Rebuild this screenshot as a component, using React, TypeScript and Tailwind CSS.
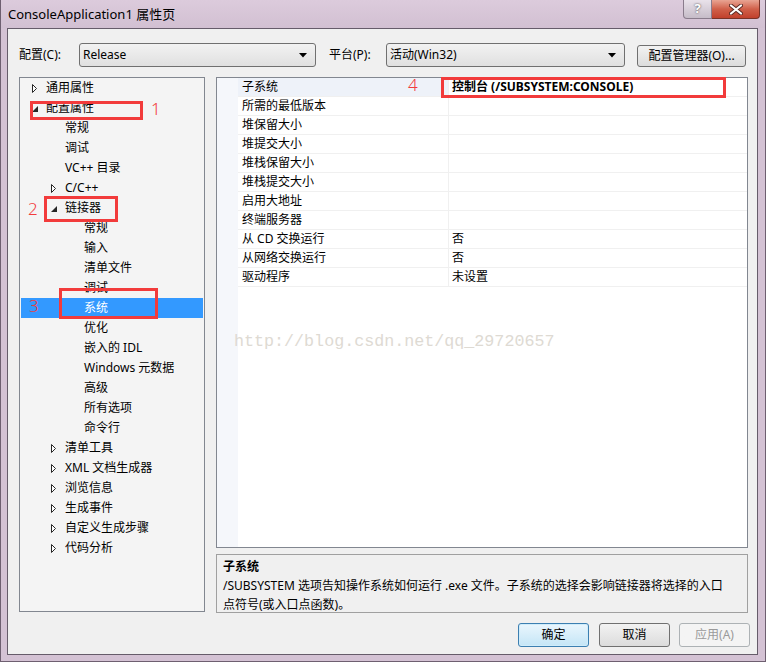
import React from "react";

type TreeItem = { t: string; l: number; a?: "c" | "o"; sel?: boolean };

const tree: TreeItem[] = [
  { t: "通用属性", l: 0, a: "c" },
  { t: "配置属性", l: 0, a: "o" },
  { t: "常规", l: 1 },
  { t: "调试", l: 1 },
  { t: "VC++ 目录", l: 1 },
  { t: "C/C++", l: 1, a: "c" },
  { t: "链接器", l: 1, a: "o" },
  { t: "常规", l: 2 },
  { t: "输入", l: 2 },
  { t: "清单文件", l: 2 },
  { t: "调试", l: 2 },
  { t: "系统", l: 2, sel: true },
  { t: "优化", l: 2 },
  { t: "嵌入的 IDL", l: 2 },
  { t: "Windows 元数据", l: 2 },
  { t: "高级", l: 2 },
  { t: "所有选项", l: 2 },
  { t: "命令行", l: 2 },
  { t: "清单工具", l: 1, a: "c" },
  { t: "XML 文档生成器", l: 1, a: "c" },
  { t: "浏览信息", l: 1, a: "c" },
  { t: "生成事件", l: 1, a: "c" },
  { t: "自定义生成步骤", l: 1, a: "c" },
  { t: "代码分析", l: 1, a: "c" },
];

const indent = ["pl-[11px]", "pl-[30px]", "pl-[49px]"];

const props: Array<[string, string]> = [
  ["子系统", "控制台 (/SUBSYSTEM:CONSOLE)"],
  ["所需的最低版本", ""],
  ["堆保留大小", ""],
  ["堆提交大小", ""],
  ["堆栈保留大小", ""],
  ["堆栈提交大小", ""],
  ["启用大地址", ""],
  ["终端服务器", ""],
  ["从 CD 交换运行", "否"],
  ["从网络交换运行", "否"],
  ["驱动程序", "未设置"],
];

function Arrow({ kind }: { kind?: "c" | "o" }) {
  return (
    <span className="w-[14px] h-[20px] shrink-0">
      {kind === "c" && (
        <svg width="14" height="20" viewBox="0 0 14 20">
          <polygon points="0.5,6.5 4.5,10.5 0.5,14.5" fill="#fff" stroke="#262626" strokeWidth="1" />
        </svg>
      )}
      {kind === "o" && (
        <svg width="14" height="20" viewBox="0 0 14 20">
          <polygon points="6,8 6,14 0,14" fill="#262626" />
        </svg>
      )}
    </span>
  );
}

function Combo({ value, width }: { value: string; width: string }) {
  return (
    <div
      className={`${width} h-[24px] flex items-center justify-between pl-[3px] pr-[8px] rounded-[3px] border border-[#707070] bg-gradient-to-b from-[#f2f2f2] to-[#e0e0e0]`}
    >
      <span>{value}</span>
      <svg width="8" height="5" viewBox="0 0 8 5">
        <polygon points="0,0 8,0 4,4.5" fill="#000" />
      </svg>
    </div>
  );
}

function Btn({ label, kind }: { label: string; kind?: "def" | "dis" }) {
  const cls =
    kind === "def"
      ? "border-[#3c7fb1] from-[#eaf6fd] to-[#c4e5f6] text-black shadow-[inset_0_0_0_1px_#d0ecfa]"
      : kind === "dis"
      ? "border-[#adb2b5] from-[#f4f4f4] to-[#f4f4f4] text-[#9a9a9a]"
      : "border-[#707070] from-[#f2f2f2] to-[#dcdcdc] text-black";
  return (
    <div
      className={`w-[71px] h-[24px] flex items-center justify-center rounded-[3px] border bg-gradient-to-b ${cls}`}
    >
      {label}
    </div>
  );
}

function RedBox({ cls }: { cls: string }) {
  return <div className={`absolute border-[3px] border-[#f23b3b] ${cls}`} />;
}

function RedNum({ n, cls }: { n: string; cls: string }) {
  return (
    <div className={`absolute text-[17px] leading-[20px] text-[#f23b3b] font-light ${cls}`}>{n}</div>
  );
}

export default function App() {
  return (
    <div className="relative w-[766px] h-[662px] overflow-hidden bg-[#d4c2d4] border-x border-b border-[#6e5f70] text-[12px] text-black font-['Noto_Sans','Noto_Sans_CJK_SC',sans-serif]">
      {/* title bar */}
      <div className="h-[28px] flex items-start justify-between bg-gradient-to-b from-[#dccbdc] to-[#d2c0d2]">
        <div className="pl-[7px] pt-[6px] text-[13px] leading-[16px]">ConsoleApplication1 属性页</div>
        <div className="flex mr-[5px]">
          <div className="w-[29px] h-[19px] flex items-center justify-center rounded-bl-[4px] border border-t-0 border-[#8a7c8c] bg-gradient-to-b from-[#e9e2ea] to-[#c6bcc8] text-[#fff] text-[13px] font-bold [text-shadow:0_0_2px_#333]">
            ?
          </div>
          <div className="w-[48px] h-[19px] flex items-center justify-center rounded-br-[4px] border border-t-0 border-l-0 border-[#7a3328] bg-gradient-to-b from-[#e8a493] via-[#d0604a] to-[#c1402c]">
            <svg width="14" height="11" viewBox="0 0 14 11">
              <path d="M2 1.5 L12 9.5 M12 1.5 L2 9.5" stroke="#5a2a24" strokeWidth="4" strokeLinecap="round" />
              <path d="M2 1.5 L12 9.5 M12 1.5 L2 9.5" stroke="#fff" strokeWidth="2.2" strokeLinecap="round" />
            </svg>
          </div>
        </div>
      </div>

      {/* client area */}
      <div className="ml-[6px] w-[751px] h-[627px] border border-[#665c6a] bg-[#f0f0f0] flex flex-col pl-[11px] pt-[14px]">
        <div className="flex items-center h-[24px]">
          <div className="w-[60px]">配置(C):</div>
          <Combo value="Release" width="w-[237px]" />
          <div className="ml-[13px] w-[57px]">平台(P):</div>
          <Combo value="活动(Win32)" width="w-[239px]" />
          <div className="ml-[12px] mt-[2px] w-[109px] h-[22px] flex items-center justify-center rounded-[3px] border border-[#707070] bg-gradient-to-b from-[#f2f2f2] to-[#dcdcdc]">
            配置管理器(O)...
          </div>
        </div>

        <div className="flex gap-[11px] mt-[10px]">
          {/* tree */}
          <div className="w-[186px] h-[535px] border border-[#828790] bg-[#f4f4f4] flex flex-col">
            {tree.map((it, i) => (
              <div
                key={i}
                className={`h-[20px] flex items-center mx-px ${indent[it.l]} ${it.sel ? "bg-[#3399ff] text-white" : ""}`}
              >
                <Arrow kind={it.a} />
                <span className="whitespace-nowrap">{it.t}</span>
              </div>
            ))}
          </div>

          {/* right column */}
          <div className="w-[532px] flex flex-col gap-[6px]">
            <div className="h-[471px] border border-[#828790] bg-white flex">
              <div className="w-[21px] bg-[#f5f7fb]" />
              <div className="flex-1 flex flex-col">
                {props.map(([name, val], i) => (
                  <div key={i} className="h-[19px] flex border-b border-[#f0f0f0]">
                    <div
                      className={`w-[211px] pl-[4px] flex items-center border-r border-[#f0f0f0] ${i === 0 ? "bg-[#eef2f9]" : ""}`}
                    >
                      {name}
                    </div>
                    <div className={`flex-1 pl-[3px] flex items-center ${i === 0 ? "font-bold" : ""}`}>{val}</div>
                  </div>
                ))}
              </div>
            </div>
            <div className="h-[59px] border border-[#a0a0a0] bg-[#f0f0f0] px-[6px] pt-[2px] leading-[19px]">
              <div className="font-bold">子系统</div>
              <div>
                /SUBSYSTEM 选项告知操作系统如何运行 .exe 文件。子系统的选择会影响链接器将选择的入口
                <br />
                点符号(或入口点函数)。
              </div>
            </div>
          </div>
        </div>

        <div className="flex justify-end mt-[10px] pr-[7px]">
          <Btn label="确定" kind="def" />
          <div className="ml-[10px]">
            <Btn label="取消" />
          </div>
          <div className="ml-[9px]">
            <Btn label="应用(A)" kind="dis" />
          </div>
        </div>
      </div>

      {/* watermark */}
      <div className="absolute left-[233px] top-[331px] text-[16.7px] leading-[22px] text-[#dedad3] font-['Liberation_Mono',monospace]">
        http://blog.csdn.net/qq_29720657
      </div>

      {/* annotations */}
      <RedBox cls="left-[29px] top-[101px] w-[113px] h-[19px]" />
      <RedNum n="1" cls="left-[150px] top-[99px]" />
      <RedBox cls="left-[43px] top-[196px] w-[74px] h-[26px]" />
      <RedNum n="2" cls="left-[27px] top-[199px]" />
      <RedBox cls="left-[58px] top-[288px] w-[99px] h-[31px]" />
      <RedNum n="3" cls="left-[28px] top-[296px]" />
      <RedBox cls="left-[440px] top-[77px] w-[285px] h-[21px]" />
      <RedNum n="4" cls="left-[407px] top-[75px]" />
    </div>
  );
}
